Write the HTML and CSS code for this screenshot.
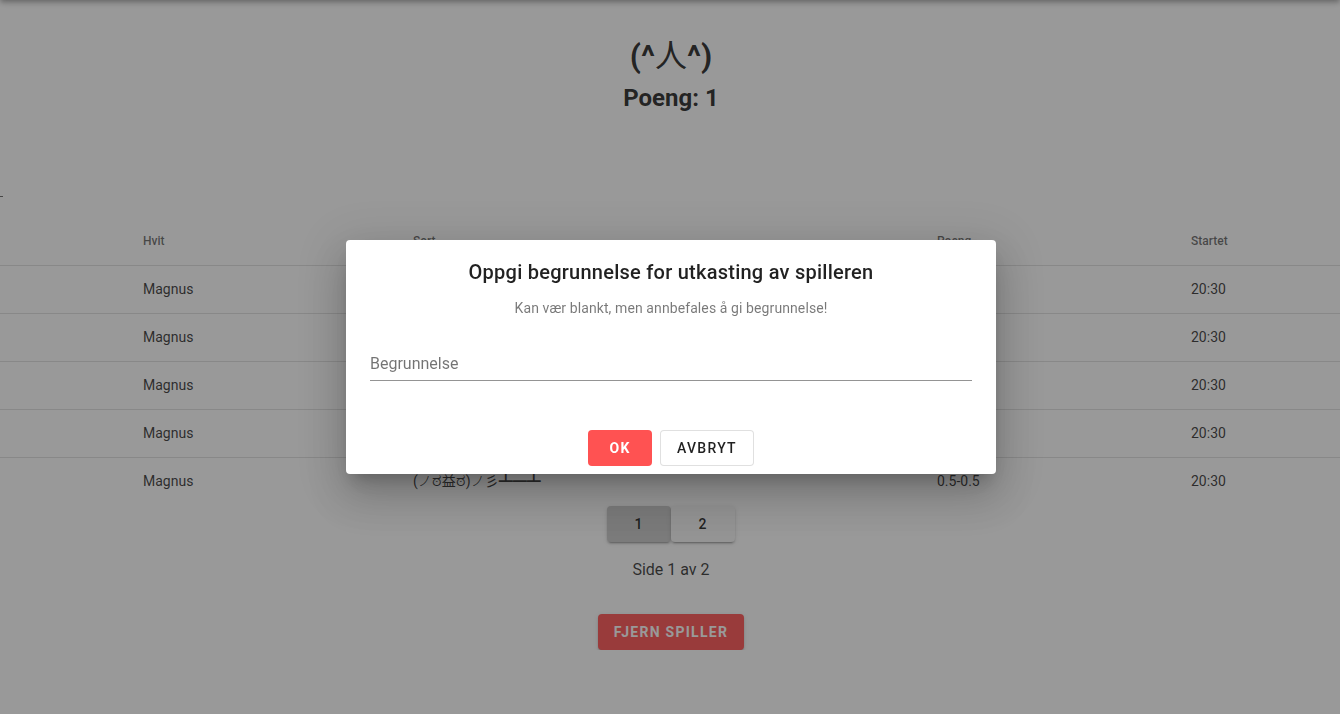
FILE: index.html
```html
<!DOCTYPE html>
<html lang="no">
<head>
<meta charset="utf-8">
<meta name="viewport" content="width=device-width, initial-scale=1">
<title>Poeng</title>
<link rel="stylesheet" href="styles.css">
</head>
<body>
<div class="app-bar"></div>
<main class="page">
  <header class="player">
    <h1 class="player-name">(^<span class="regular">人</span>^)</h1>
    <h2 class="player-points">Poeng: 1</h2>
  </header>
  <div class="field-edge"></div>
  <table class="games">
    <colgroup><col class="col-edge"><col class="col-white"><col class="col-black"><col class="col-points"><col class="col-start"></colgroup>
    <thead>
      <tr><th></th><th>Hvit</th><th>Sort</th><th>Poeng</th><th>Startet</th></tr>
    </thead>
    <tbody>
      <tr><td></td><td>Magnus</td><td></td><td></td><td>20:30</td></tr>
      <tr><td></td><td>Magnus</td><td></td><td></td><td>20:30</td></tr>
      <tr><td></td><td>Magnus</td><td></td><td></td><td>20:30</td></tr>
      <tr><td></td><td>Magnus</td><td></td><td></td><td>20:30</td></tr>
      <tr><td></td><td>Magnus</td><td>(<span class="light">ノ</span><span class="eye">ಠ</span>益<span class="eye">ಠ</span>)<span class="light">ノ</span>彡<span class="table-flip">┻━┻</span></td><td>0.5-0.5</td><td>20:30</td></tr>
    </tbody>
  </table>
  <nav class="pages">
    <button class="btn page-btn current" type="button">1</button>
    <button class="btn page-btn" type="button">2</button>
  </nav>
  <p class="page-info">Side 1 av 2</p>
  <button class="btn danger raised" type="button">Fjern spiller</button>
</main>
<div class="overlay">
  <form class="dialog" role="dialog" aria-modal="true" aria-labelledby="dialog-title">
    <h3 class="dialog-title" id="dialog-title">Oppgi begrunnelse for utkasting av spilleren</h3>
    <p class="dialog-hint">Kan vær blankt, men annbefales å gi begrunnelse!</p>
    <input class="reason" type="text" placeholder="Begrunnelse" aria-label="Begrunnelse">
    <div class="actions">
      <button class="btn danger" type="button">OK</button>
      <button class="btn outlined" type="button">Avbryt</button>
    </div>
  </form>
</div>
</body>
</html>
```
FILE: styles.css
```css
* { box-sizing: border-box; }

body {
  margin: 0;
  background: #fff;
  color: rgba(0, 0, 0, .87);
  font-family: Roboto, "Noto Sans CJK JP", "Noto Sans", sans-serif;
  font-size: 16px;
  line-height: 24px;
  overflow: hidden;
}

h1, h2, h3, p { margin: 0; }

.app-bar {
  position: fixed;
  inset: -56px 0 auto;
  height: 56px;
  box-shadow: 0 2px 4px -1px rgba(0, 0, 0, .2), 0 4px 5px 0 rgba(0, 0, 0, .14), 0 1px 10px 0 rgba(0, 0, 0, .12);
}

.page {
  display: flex;
  flex-direction: column;
  align-items: center;
  padding-top: 32px;
}

.player {
  padding-left: 2px;
  text-align: center;
}
.player-name {
  font-size: 32px;
  line-height: 48px;
  font-weight: 700;
}
.player-points {
  font-size: 24px;
  line-height: 36px;
  font-weight: 700;
}
.light { font-weight: 300; }
.regular { font-weight: 400; }

.field-edge {
  align-self: flex-start;
  width: 3px;
  height: 81px;
  margin-bottom: 20px;
  border-bottom: 1px solid rgba(0, 0, 0, .6);
}

.games {
  width: 100%;
  table-layout: fixed;
  border-collapse: separate;
  border-spacing: 0;
  font-size: 14px;
}
.col-edge { width: 127px; }
.col-white { width: 270px; }
.col-black { width: 524px; }
.col-points { width: 254px; }
.games th, .games td {
  height: 48px;
  padding: 0 16px;
  line-height: 20px;
  text-align: left;
  white-space: nowrap;
}
.games td {
  padding-bottom: 2px;
  color: rgba(0, 0, 0, .8);
}
.games th {
  height: 49px;
  font-size: 12px;
  font-weight: 500;
  color: rgba(0, 0, 0, .6);
}
.games th, .games tr:not(:last-child) td { border-bottom: 1px solid rgba(0, 0, 0, .12); }
.eye {
  font-size: 18px;
  line-height: 16px;
}
.table-flip { font-weight: 900; }

.btn {
  height: 36px;
  padding: 0 16px;
  border: 0;
  border-radius: 4px;
  background: #fff;
  color: rgba(0, 0, 0, .87);
  font: 500 14px/20px Roboto, sans-serif;
  letter-spacing: .09em;
  text-transform: uppercase;
}
.btn.danger {
  min-width: 64px;
  background: #ff5252;
  color: #fff;
  font-weight: 700;
}
.btn.raised, .page-btn {
  box-shadow: 0 3px 1px -2px rgba(0, 0, 0, .2), 0 2px 2px 0 rgba(0, 0, 0, .14), 0 1px 5px 0 rgba(0, 0, 0, .12);
}
.pages {
  display: flex;
  padding-left: 2px;
}
.page-btn {
  width: 64px;
  background: #f5f5f5;
}
.page-btn.current { background: #c8c8c8; }
.page-info {
  padding: 16px 0 32px 2px;
  color: rgba(0, 0, 0, .8);
}
.raised { margin-left: 2px; }

.overlay {
  position: fixed;
  inset: 0;
  display: flex;
  align-items: center;
  justify-content: center;
  padding-left: 2px;
  background: rgba(33, 33, 33, .46);
}
.dialog {
  width: 650px;
  max-width: 90%;
  padding: 16px 24px 8px;
  border-radius: 4px;
  background: #fff;
  text-align: center;
  box-shadow: 0 11px 15px -7px rgba(0, 0, 0, .2), 0 24px 38px 3px rgba(0, 0, 0, .14), 0 9px 46px 8px rgba(0, 0, 0, .12);
}
.dialog-title {
  font-size: 20px;
  line-height: 32px;
  font-weight: 500;
  letter-spacing: .0125em;
}
.dialog-hint {
  padding-top: 10px;
  font-size: 14px;
  line-height: 20px;
  letter-spacing: .007em;
  color: rgba(0, 0, 0, .53);
}
.reason {
  display: block;
  width: 100%;
  height: 35px;
  margin-top: 28px;
  padding: 0;
  border: 0;
  border-bottom: 1px solid rgba(0, 0, 0, .42);
  border-radius: 0;
  background: none;
  font: 16px/20px Roboto, sans-serif;
}
.reason::placeholder { color: rgba(0, 0, 0, .55); }
.actions {
  display: flex;
  justify-content: center;
  gap: 8px;
  padding-top: 49px;
}
.outlined { border: 1px solid rgba(0, 0, 0, .12); }
```
